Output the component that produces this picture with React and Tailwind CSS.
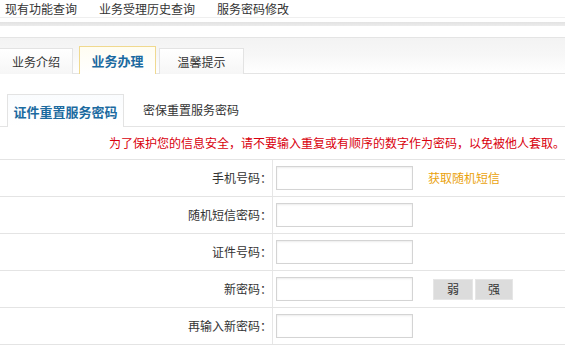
export default function App() {
  const rows = [
    { label: "手机号码：", extra: "sms" },
    { label: "随机短信密码：" },
    { label: "证件号码：" },
    { label: "新密码：", extra: "strength" },
    { label: "再输入新密码：" },
  ];
  return (
    <div className="w-[565px] h-[355px] overflow-hidden bg-white text-[12px] text-[#333] font-['Noto_Sans_CJK_SC','Noto_Sans',sans-serif]">
      {/* top nav */}
      <div className="h-[18px] flex items-center pl-[5px] gap-[22px] leading-[17px] border-b border-[#efefef]">
        <span>现有功能查询</span>
        <span>业务受理历史查询</span>
        <span>服务密码修改</span>
      </div>
      <div className="mt-[4px] h-[4px] bg-gradient-to-b from-[#e2e2e2] to-[#ececec]" />
      {/* tab bar */}
      <div className="mt-[11px] h-[37px] border-t border-b border-[#e4e4e4] bg-gradient-to-b from-[#f3f3f3] via-[#f7f7f7] to-white flex items-end">
        <div className="-ml-[1px] mb-[-1px] w-[74px] h-[26px] border border-b-0 border-[#e3e3e3] bg-gradient-to-b from-white to-[#f6f6f6] flex items-center justify-center leading-none">
          业务介绍
        </div>
        <div className="ml-[6px] mb-[-1px] w-[77px] h-[28px] border border-b-0 border-[#f0d98f] bg-gradient-to-b from-[#fffdf2] to-white flex items-center justify-center font-bold text-[13px] text-[#1b6aa0] leading-none">
          业务办理
        </div>
        <div className="ml-[3px] mb-[-1px] w-[85px] h-[26px] border border-b-0 border-[#e3e3e3] bg-gradient-to-b from-white to-[#f6f6f6] flex items-center justify-center leading-none">
          温馨提示
        </div>
      </div>
      {/* sub tabs */}
      <div className="h-[53px] border-b border-[#e4e4e4] flex items-end">
        <div className="ml-[7px] mb-[-1px] w-[117px] h-[33px] border border-b-0 border-[#e3e3e3] bg-gradient-to-b from-[#fafcfe] to-white flex items-center justify-center font-bold text-[13px] text-[#1b6aa0] leading-none">
          证件重置服务密码
        </div>
        <div className="ml-[19px] h-[33px] w-[96px] flex items-center justify-center leading-none">
          密保重置服务密码
        </div>
      </div>
      {/* message */}
      <div className="h-[33px] border-b border-[#e4e4e4] flex items-center justify-end text-[#d9000d] whitespace-nowrap leading-none">
        为了保护您的信息安全，请不要输入重复或有顺序的数字作为密码，以免被他人套取。
      </div>
      {/* form */}
      {rows.map((r, i) => (
        <div key={i} className="h-[37px] border-b border-[#e4e4e4] flex items-stretch">
          <div className="w-[273px] border-r border-[#e6e6e6] flex items-center justify-end leading-none">
            {r.label}
          </div>
          <div className="flex items-center pl-[3px]">
            <div className="w-[137px] h-[24px] border border-[#d4d4d4] shadow-[inset_0_1px_2px_rgba(0,0,0,0.08)] bg-white" />
            {r.extra === "sms" && (
              <span className="ml-[15px] text-[#eaa20c] leading-none">获取随机短信</span>
            )}
            {r.extra === "strength" && (
              <div className="ml-[20px] flex gap-[2px]">
                <div className="w-[40px] h-[21px] bg-[#dcdcdc] border border-[#e6e6e6] flex items-center justify-center leading-none">弱</div>
                <div className="w-[38px] h-[21px] bg-[#dcdcdc] border border-[#e6e6e6] flex items-center justify-center leading-none">强</div>
              </div>
            )}
          </div>
        </div>
      ))}
    </div>
  );
}
